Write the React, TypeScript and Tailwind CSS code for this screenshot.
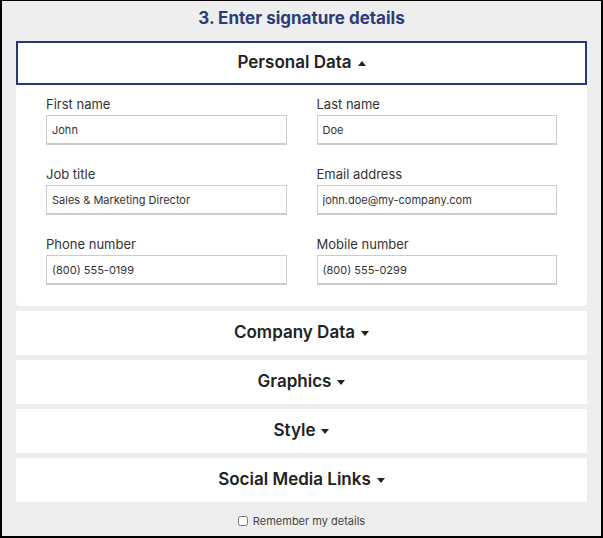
import { useState } from "react";

const fields = [
  { label: "First name", value: "John" },
  { label: "Last name", value: "Doe" },
  { label: "Job title", value: "Sales & Marketing Director" },
  { label: "Email address", value: "john.doe@my-company.com" },
  { label: "Phone number", value: "(800) 555-0199" },
  { label: "Mobile number", value: "(800) 555-0299" },
];

const sections = ["Company Data", "Graphics", "Style", "Social Media Links"];

function Caret({ up }: { up?: boolean }) {
  return (
    <svg width="8" height="5" viewBox="0 0 8 5" className="ml-[6px] mt-[1px]">
      {up ? (
        <path d="M0 5 L4 0 L8 5 Z" fill="#222" />
      ) : (
        <path d="M0 0 L4 5 L8 0 Z" fill="#222" />
      )}
    </svg>
  );
}

export default function App() {
  const [remember, setRemember] = useState(false);

  return (
    <div
      className="w-[603px] h-[538px] bg-[#eeeeee] border-l-2 border-r-2 border-t border-b-2 border-black overflow-hidden"
      style={{ fontFamily: "Inter, 'Noto Sans', sans-serif" }}
    >
      <h2 className="pt-[5px] h-[40px] text-center text-[17px] leading-[24px] font-bold text-[#2b3c7a]">
        3. Enter signature details
      </h2>

      <div className="px-[14px] flex flex-col gap-[5px]">
        <div className="bg-white rounded-b-[4px]">
          <div className="h-[44px] border-2 border-[#24397a] flex items-center justify-center">
            <span className="text-[17px] font-semibold text-[#222]">Personal Data</span>
            <Caret up />
          </div>
          <div className="px-[30px] pt-[10px] pb-[21px] grid grid-cols-2 gap-x-[30px] gap-y-[20px]">
            {fields.map((f) => (
              <div key={f.label} className="flex flex-col">
                <label className="text-[13px] leading-[19px] text-[#333] mb-[1px]">{f.label}</label>
                <input
                  defaultValue={f.value}
                  className="h-[30px] px-[5px] text-[11px] text-[#333] bg-white border border-[#cccccc] border-b-2 outline-none"
                />
              </div>
            ))}
          </div>
        </div>

        {sections.map((s) => (
          <div key={s} className="h-[44px] bg-white flex items-center justify-center">
            <span className="text-[17px] font-semibold text-[#222]">{s}</span>
            <Caret />
          </div>
        ))}

        <label className="mt-[6px] flex items-center justify-center gap-[5px] text-[11px] text-[#444]">
          <input
            type="checkbox"
            checked={remember}
            onChange={(e) => setRemember(e.target.checked)}
            className="w-[10px] h-[10px]"
          />
          Remember my details
        </label>
      </div>
    </div>
  );
}
